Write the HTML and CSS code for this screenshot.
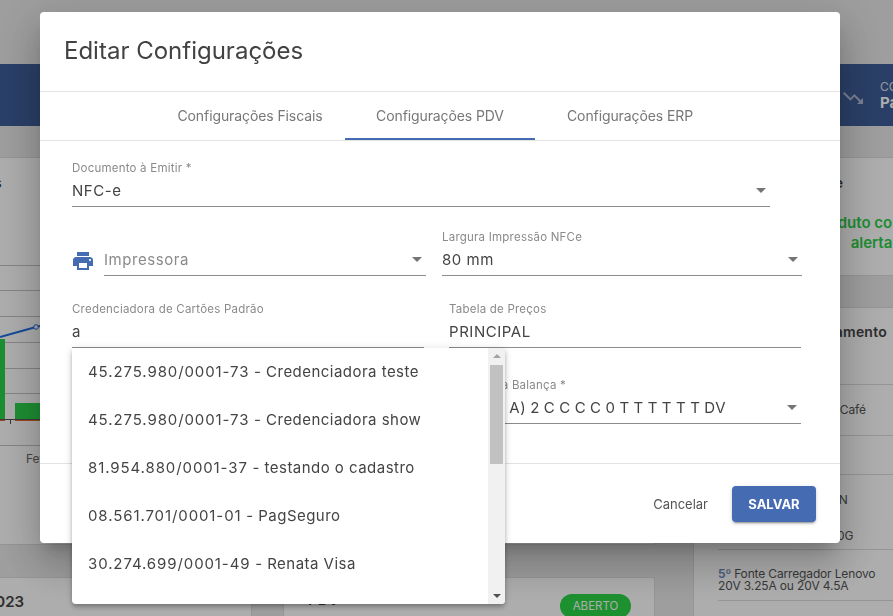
FILE: index.html
```html
<!DOCTYPE html>
<html lang="pt-BR">
<head>
<meta charset="utf-8">
<title>Editar Configurações</title>
<link rel="stylesheet" href="styles.css">
</head>
<body>
<div class="page">
  <div class="topbar"></div>
  <div class="band">
    <svg class="trend" viewBox="0 0 24 24"><path d="M16 18l2.29-2.29-4.88-4.88-4 4L2 7.41 3.41 6l6 6 4-4 6.3 6.29L22 12v6z"/></svg>
    <div class="band-text"><span class="band-small">CONTAS</span><strong class="band-strong">Pagar</strong></div>
  </div>
  <div class="content">
    <div class="col-left">
      <section class="card chart-card">
        <h3 class="chart-title">Vendas no Mês</h3>
        <svg class="chart" viewBox="0 0 660 320" preserveAspectRatio="xMinYMin">
          <g class="grid-lines">
            <line x1="0" x2="660" y1="107.500" y2="107.500"/>
            <line x1="0" x2="660" y1="132.500" y2="132.500"/>
            <line x1="0" x2="660" y1="158.500" y2="158.500"/>
            <line x1="0" x2="660" y1="184.500" y2="184.500"/>
            <line x1="0" x2="660" y1="210.500" y2="210.500"/>
            <line x1="0" x2="660" y1="235.500" y2="235.500"/>
            <line x1="0" x2="660" y1="287.500" y2="287.500"/>
          </g>
          <rect class="bar-green" x="-10" y="181" width="15" height="80"/>
          <rect class="bar-green" x="15" y="245" width="60" height="16"/>
          <rect class="bar-orange" x="-10" y="261" width="15" height="2"/>
          <rect class="bar-orange" x="15" y="261" width="60" height="2"/>
          <line class="axis" x1="0" x2="60" y1="261.500" y2="261.500"/>
          <line class="axis" x1="10.500" x2="10.500" y1="261" y2="266"/>
          <polyline class="trend-line" points="0,179 36,169 80,158"/>
          <circle class="trend-dot" cx="36" cy="169" r="2.300"/>
          <text class="axis-label" x="26" y="305">Fev</text>
        </svg>
      </section>
      <div class="bottom-cards">
        <section class="card mini-card"><strong class="mini-date">10/2023</strong></section>
        <section class="card pdv-card">
          <strong class="pdv-title">PDV</strong>
          <span class="pill">ABERTO</span>
        </section>
      </div>
    </div>
    <div class="col-right">
      <section class="card alert-card">
        <h3 class="alert-title">Alerta de Estoque</h3>
        <p class="alert-text">Nenhum produto com estoque em<br>alerta</p>
      </section>
      <section class="card rank-card">
        <h3 class="rank-title">Ranking de Faturamento</h3>
        <div class="rank-row r1"><span>1º Produto Exemplo -</span></div>
        <div class="rank-row r2"><span><b>2º</b> Filtro para Preparo Café</span></div>
        <div class="rank-row r3"><span></span></div>
        <div class="rank-row r4"><span><b>4º</b> Monitor LED 24,5" N<br>Painel IPS Full HD<br>Entrada HDMI<br>Memória de Vídeo a 10G</span></div>
        <div class="rank-row r5"><span><b>5º</b> Fonte Carregador Lenovo<br>20V 3.25A ou 20V 4.5A</span></div>
      </section>
    </div>
  </div>
</div>

<div class="overlay">
  <div class="modal">
    <h2 class="modal-title">Editar Configurações</h2>
    <nav class="tabs">
      <a class="tab">Configurações Fiscais</a>
      <a class="tab tab-active">Configurações PDV</a>
      <a class="tab">Configurações ERP</a>
    </nav>
    <div class="form">
      <div class="row row-doc">
        <div class="field w-doc">
          <label class="field-label">Documento à Emitir *</label>
          <div class="field-value">NFC-e<i class="caret"></i></div>
        </div>
      </div>
      <div class="row row-print">
        <div class="printer-field">
          <svg class="printer" viewBox="0 0 24 24"><path d="M19 8H5c-1.66 0-3 1.340-3 3v6h4v4h12v-4h4v-6c0-1.660-1.340-3-3-3zm-3 11H8v-5h8v5zm3-7c-.55 0-1-.45-1-1s.45-1 1-1 1 .45 1 1-.45 1-1 1zm-1-9H6v4h12V3z"/></svg>
          <div class="field w-print">
            <div class="field-value placeholder">Impressora<i class="caret"></i></div>
          </div>
        </div>
        <div class="field w-width">
          <label class="field-label">Largura Impressão NFCe</label>
          <div class="field-value">80 mm<i class="caret"></i></div>
        </div>
      </div>
      <div class="row row-card">
        <div class="field w-cred">
          <label class="field-label">Credenciadora de Cartões Padrão</label>
          <div class="field-value">a</div>
        </div>
        <div class="field w-table">
          <label class="field-label">Tabela de Preços</label>
          <div class="field-value">PRINCIPAL</div>
        </div>
      </div>
      <div class="row row-scale">
        <div class="field w-table">
          <label class="field-label">Modelo da Balança *</label>
          <div class="field-value scale-value">Modelo A) 2 C C C C 0 T T T T T T DV<i class="caret"></i></div>
        </div>
      </div>
    </div>
    <div class="actions">
      <button class="btn-cancel">Cancelar</button>
      <button class="btn-save">SALVAR</button>
    </div>
    <div class="menu">
      <ul class="menu-list">
        <li class="menu-item"><span class="cnpj">45.275.980/0001-73</span> - Credenciadora teste</li>
        <li class="menu-item"><span class="cnpj">45.275.980/0001-73</span> - Credenciadora show</li>
        <li class="menu-item"><span class="cnpj">81.954.880/0001-37</span> - testando o cadastro</li>
        <li class="menu-item"><span class="cnpj">08.561.701/0001-01</span> - PagSeguro</li>
        <li class="menu-item"><span class="cnpj">30.274.699/0001-49</span> - Renata Visa</li>
      </ul>
      <div class="scrollbar">
        <i class="arrow-up"></i>
        <div class="track"><div class="thumb"></div></div>
        <i class="arrow-down"></i>
      </div>
    </div>
  </div>
</div>
</body>
</html>
```
FILE: styles.css
```css
* { box-sizing: border-box; }
html, body { margin: 0; height: 100%; overflow: hidden; }
body { font-family: Inter, "Noto Sans", sans-serif; color: #444; background: #e9e9e9; }

.page { width: 893px; height: 616px; overflow: hidden; }
.topbar { height: 64px; }
.band { height: 62px; background: #3f5e99; display: flex; align-items: center; padding-left: 841px; color: #fff; white-space: nowrap; }
.trend { width: 24px; height: 24px; fill: rgba(255,255,255,.6); flex: none; margin-top: 6px; }
.band-text { display: flex; flex-direction: column; margin-left: 15px; line-height: 16px; }
.band-small { font-size: 12px; opacity: .8; }
.band-strong { font-size: 15px; }

.content { display: flex; padding-top: 31px; gap: 38px; width: 1000px; }
.col-left { width: 655px; flex: none; }
.col-right { width: 360px; flex: none; }
.card { background: #fff; border: 1px solid #dcdcdc; }

.chart-card { height: 388px; border-left: 0; overflow: hidden; }
.chart-title { margin: 16px 0 0 -102px; font-size: 14px; font-weight: 600; line-height: 18px; white-space: nowrap; height: 8px; }
.chart { display: block; margin-top: -24px; width: 660px; height: 320px; overflow: visible; }
.grid-lines line { stroke: #c4c4c4; stroke-width: 1; }
.bar-green { fill: #2cd24b; }
.bar-orange { fill: #e9672a; }
.axis { stroke: #555; stroke-width: 1; }
.trend-line { fill: none; stroke: #1f6fe0; stroke-width: 2; }
.trend-dot { fill: #fff; stroke: #1f6fe0; stroke-width: 1; }
.axis-label { font-size: 12px; fill: #666; }

.bottom-cards { display: flex; margin-top: 32px; gap: 31px; }
.mini-card { width: 252px; height: 100px; border-left: 0; padding: 14px 0 0 0; }
.mini-date { display: block; font-size: 15px; font-weight: 600; margin-left: -36px; line-height: 20px; white-space: nowrap; }
.pdv-card { width: 372px; height: 100px; display: flex; justify-content: space-between; align-items: flex-start; padding: 12px 23px 0 24px; }
.pdv-title { font-size: 15px; font-weight: 600; }
.pill { display: block; width: 71px; height: 24px; margin-top: 4px; border-radius: 12px; background: #2cd446; color: #fff; font-size: 11.500px; text-align: center; line-height: 24px; }

.col-right { display: flex; flex-direction: column; gap: 31px; }
.alert-card { height: 119px; padding: 16px 0 0 24px; }
.alert-title { margin: 0; font-size: 14px; font-weight: 600; line-height: 18px; letter-spacing: .3px; white-space: nowrap; }
.alert-text { margin: 21px 0 0 -24px; padding-right: 3px; color: #2ccf48; font-size: 15px; font-weight: 600; line-height: 20px; text-align: center; white-space: nowrap; }
.rank-card { height: 320px; padding: 14px 0 0 24px; }
.rank-title { margin: 0; font-size: 14px; font-weight: 600; line-height: 20px; letter-spacing: .2px; height: 38px; white-space: nowrap; }
.rank-row { border-bottom: 1px solid #dcdcdc; display: flex; align-items: center; font-size: 12px; line-height: 12px; letter-spacing: -.15px; color: #555; white-space: nowrap; }
.rank-row b { font-weight: 600; color: #6a86c0; }
.r1 { height: 25px; }
.r2 { height: 51px; }
.r3 { height: 39px; }
.r4 { height: 75px; padding-top: 12px; }
.r5 { height: 51px; padding-top: 10px; }

.overlay { position: fixed; inset: 0; background: rgba(0,0,0,.32); padding: 12px 0 0 40px; }
.modal { position: relative; width: 800px; height: 531px; background: #fff; border-radius: 4px; display: flex; flex-direction: column;
  box-shadow: 0 11px 15px -7px rgba(0,0,0,.2), 0 24px 38px 3px rgba(0,0,0,.14), 0 9px 46px 8px rgba(0,0,0,.12); }
.modal-title { margin: 0; height: 80px; padding: 22px 24px 0; font-size: 24px; font-weight: 400; line-height: 34px; color: #424242; border-bottom: 1px solid #e2e2e2; }
.tabs { height: 49px; display: flex; justify-content: center; border-bottom: 1px solid #e2e2e2; }
.tab { width: 190px; height: 48px; font-size: 14px; line-height: 48px; letter-spacing: -.1px; text-align: center; color: #777; }
.tab-active { border-bottom: 2px solid #456cb3; }

.form { flex: 1; padding: 0 38px 0 32px; border-bottom: 1px solid #e2e2e2; }
.row { display: flex; }
.row-doc { height: 66px; }
.row-print { height: 69px; gap: 16px; }
.row-card { height: 72px; gap: 25px; }
.row-scale { height: 76px; justify-content: flex-end; padding-right: 1px; }
.printer-field { display: flex; align-items: flex-end; }
.printer { width: 24px; height: 24px; fill: #456cb3; margin: 0 9px 3px -1px; flex: none; }
.field { display: flex; flex-direction: column; justify-content: flex-end; }
.field-label { font-size: 11.500px; line-height: 14px; letter-spacing: .22px; color: #8a8a8a; }
.field-value { position: relative; height: 32px; border-bottom: 1px solid #8c8c8c; font-size: 15px; line-height: 32px; letter-spacing: .55px; color: #444; white-space: nowrap; }
.scale-value { word-spacing: -.85px; }
.placeholder { color: #8a8a8a; }
.caret { position: absolute; right: 4px; top: 13px; width: 0; height: 0; border: 5px solid transparent; border-top-color: #757575; border-bottom: 0; }
.w-doc { width: 698px; }
.w-print { width: 322px; }
.w-width { width: 360px; }
.w-cred { width: 352px; }
.w-table { width: 352px; }

.actions { height: 79px; flex: none; display: flex; justify-content: flex-end; align-items: center; padding: 0 24px 0 0; }
.btn-cancel { border: 0; background: none; font: inherit; font-size: 13px; color: #555; padding: 0; margin-right: 24px; }
.btn-save { border: 0; width: 84px; height: 36px; border-radius: 4px; background: #456cb3; color: #fff; font: inherit; font-size: 13px; font-weight: 700; box-shadow: 0 3px 1px -2px rgba(0,0,0,.2), 0 2px 2px 0 rgba(0,0,0,.14), 0 1px 5px 0 rgba(0,0,0,.12); }

.menu { position: absolute; left: 32px; top: 336px; width: 433px; height: 256px; background: #fff; border-radius: 0 0 4px 4px; display: flex; overflow: hidden;
  box-shadow: 0 2px 4px -1px rgba(0,0,0,.2), 0 4px 5px 0 rgba(0,0,0,.14), 0 1px 10px 0 rgba(0,0,0,.12); }
.menu-list { flex: 1; list-style: none; margin: 0; padding: 0; }
.menu-item { height: 48px; padding-left: 16px; font-size: 15px; line-height: 48px; letter-spacing: .47px; color: #444; white-space: nowrap; }
.cnpj { letter-spacing: .9px; }
.scrollbar { width: 17px; background: #f1f1f1; display: flex; flex-direction: column; align-items: center; }
.track { flex: 1; width: 100%; padding-left: 2px; }
.thumb { width: 13px; height: 99px; background: #c1c1c1; }
.arrow-up, .arrow-down { display: block; width: 0; height: 0; border: 4px solid transparent; flex: none; }
.arrow-up { border-bottom-color: #a3a3a3; border-top: 0; margin: 6px 0 7px; }
.arrow-down { border-top-color: #505050; border-bottom: 0; margin: 7px 0 6px; }
```
